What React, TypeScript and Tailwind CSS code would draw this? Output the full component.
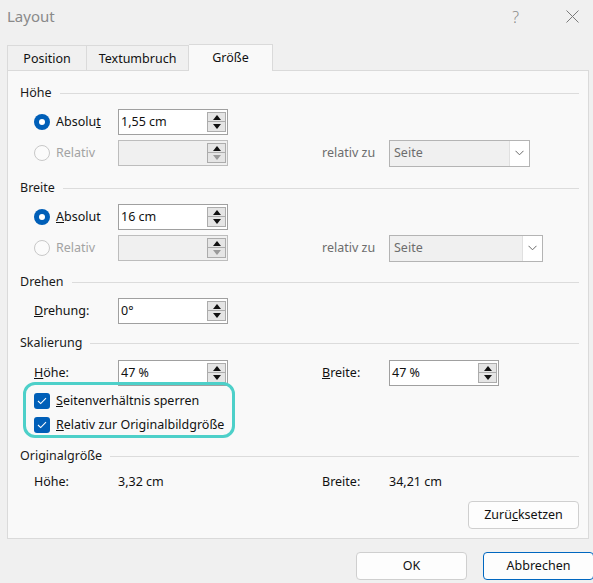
import React from 'react';

const font = "font-['Noto_Sans',sans-serif]";

function SectionHeading({ title }: { title: string }) {
    return (
        <div className="flex items-center h-5 pl-[12px] pr-[9px]">
            <span className="text-[#1a1a1a]">{title}</span>
            <div className="flex-1 h-px bg-[#dcdcdc] ml-[8px]" />
        </div>
    );
}

function SpinButtons({ disabled }: { disabled?: boolean }) {
    return (
        <div className="flex flex-col gap-0 py-[2px] pr-[1px]">
            <div className="w-[19px] h-[11px] border border-[#acacac] bg-[#e5e5e5] flex items-center justify-center">
                <svg width="8" height="5" viewBox="0 0 8 5">
                    <path d="M0 5 L4 0 L8 5 Z" fill="#111" />
                </svg>
            </div>
            <div className="w-[19px] h-[11px] border border-[#acacac] border-t-0 bg-[#e5e5e5] flex items-center justify-center">
                <svg width="8" height="5" viewBox="0 0 8 5">
                    <path d="M0 0 L4 5 L8 0 Z" fill={disabled ? '#9a9a9a' : '#111'} />
                </svg>
            </div>
        </div>
    );
}

function Spin({ value, disabled, width = 'w-[110px]' }: { value?: string; disabled?: boolean; width?: string }) {
    return (
        <div
            className={`${width} h-[26px] border flex items-stretch ${disabled ? 'border-[#bdbdbd] bg-[#f0f0f0]' : 'border-[#a0a0a0] bg-white'}`}
        >
            <div className="flex-1 flex items-center pl-[2px] text-[#111]">{value}</div>
            <SpinButtons disabled={disabled} />
        </div>
    );
}

function Select({ width }: { width: string }) {
    return (
        <div className={`${width} h-[27px] border border-[#b4b4b4] bg-[#f0f0f0] flex items-stretch`}>
            <div className="flex-1 flex items-center pl-[4px] text-[#6d6d6d]">Seite</div>
            <div className="w-[20px] bg-white border-l border-[#e0e0e0] flex items-center justify-center">
                <svg width="9" height="6" viewBox="0 0 9 6">
                    <path d="M0.5 0.8 L4.5 4.8 L8.5 0.8" stroke="#6a6a6a" strokeWidth="1" fill="none" />
                </svg>
            </div>
        </div>
    );
}

function Radio({ checked, disabled }: { checked?: boolean; disabled?: boolean }) {
    if (checked) {
        return (
            <div className="w-[16px] h-[16px] rounded-full bg-[#005fb8] flex items-center justify-center">
                <div className="w-[6px] h-[6px] rounded-full bg-white" />
            </div>
        );
    }
    return (
        <div
            className={`w-[16px] h-[16px] rounded-full border ${disabled ? 'border-[#c8c8c8] bg-[#fbfbfb]' : 'border-[#6a6a6a] bg-white'}`}
        />
    );
}

function Checkbox() {
    return (
        <div className="w-[16px] h-[16px] rounded-[3px] bg-[#005fb8] flex items-center justify-center">
            <svg width="10" height="8" viewBox="0 0 10 8">
                <path d="M1 4 L3.7 6.6 L9 1.2" stroke="white" strokeWidth="1.1" fill="none" />
            </svg>
        </div>
    );
}

function SizeRows({ absLabel, absValue, selectWidth }: { absLabel: React.ReactNode; absValue: string; selectWidth: string }) {
    return (
        <>
            <div className="flex items-center h-[26px] mt-[6px] pl-[26px]">
                <div className="w-[84px] flex items-center gap-[6px]">
                    <Radio checked />
                    <span className="text-[#111]">{absLabel}</span>
                </div>
                <Spin value={absValue} />
            </div>
            <div className="flex items-center h-[26px] mt-[5px] pl-[26px]">
                <div className="w-[84px] flex items-center gap-[6px]">
                    <Radio disabled />
                    <span className="text-[#a3a3a3]">Relativ</span>
                </div>
                <Spin disabled />
                <div className="w-[94px]" />
                <span className="w-[67px] text-[#6d6d6d]">relativ zu</span>
                <Select width={selectWidth} />
            </div>
        </>
    );
}

export default function App() {
    return (
        <div className={`w-[593px] h-[583px] bg-[#f0f0f0] overflow-hidden flex flex-col text-[12.5px] ${font}`}>
            {/* title bar */}
            <div className="h-[44px] flex items-start pt-[5px] pl-[7px]">
                <span className="text-[15px] text-[#8a8a8a]">Layout</span>
                <span className="ml-auto text-[16px] text-[#8a8a8a] mr-[47px] font-light">?</span>
                <svg width="13" height="13" viewBox="0 0 13 13" className="mt-[5px] mr-[14px]">
                    <path d="M0.5 0.5 L12.5 12.5 M12.5 0.5 L0.5 12.5" stroke="#7a7a7a" strokeWidth="1" />
                </svg>
            </div>

            {/* tabs */}
            <div className="flex items-end pl-[7px] h-[26px] relative z-10">
                <div className="w-[80px] h-[25px] border border-b-0 border-[#dadada] bg-[#f0f0f0] flex items-center justify-center text-[#111] pt-[2px]">
                    Position
                </div>
                <div className="w-[102px] h-[25px] border border-l-0 border-b-0 border-[#dadada] bg-[#f0f0f0] flex items-center justify-center text-[#111] pt-[2px]">
                    Textumbruch
                </div>
                <div className="w-[84px] h-[27px] -mb-px border border-l-0 border-b-0 border-[#dadada] bg-[#f9f9f9] flex items-center justify-center text-[#111]">
                    Größe
                </div>
            </div>

            {/* panel */}
            <div className="mx-[7px] w-[582px] border border-[#dadada] bg-[#f9f9f9] pt-[12px] pb-[9px] flex flex-col">
                <SectionHeading title="Höhe" />
                <SizeRows
                    absLabel={<>Absolu<span className="underline">t</span></>}
                    absValue="1,55 cm"
                    selectWidth="w-[141px]"
                />

                <div className="mt-[12px]">
                    <SectionHeading title="Breite" />
                </div>
                <SizeRows
                    absLabel={<><span className="underline">A</span>bsolut</>}
                    absValue="16 cm"
                    selectWidth="w-[154px]"
                />

                <div className="mt-[11px]">
                    <SectionHeading title="Drehen" />
                </div>
                <div className="flex items-center h-[26px] mt-[6px] pl-[26px]">
                    <span className="w-[84px] text-[#111]">
                        <span className="underline">D</span>rehung:
                    </span>
                    <Spin value="0°" />
                </div>

                <div className="mt-[9px]">
                    <SectionHeading title="Skalierung" />
                </div>
                <div className="flex items-center h-[26px] mt-[7px] pl-[26px]">
                    <span className="w-[84px] text-[#111]">
                        <span className="underline">H</span>öhe:
                    </span>
                    <Spin value="47 %" />
                    <div className="w-[94px]" />
                    <span className="w-[67px] text-[#111]">
                        <span className="underline">B</span>reite:
                    </span>
                    <Spin value="47 %" />
                </div>

                <div className="relative mt-[3px]">
                    <div className="flex items-center h-[24px] pl-[26px] gap-[6px]">
                        <Checkbox />
                        <span className="text-[#111]">
                            <span className="underline">S</span>eitenverhältnis sperren
                        </span>
                    </div>
                    <div className="flex items-center h-[24px] pl-[26px] gap-[6px]">
                        <Checkbox />
                        <span className="text-[#111]">
                            <span className="underline">R</span>elativ zur Originalbildgröße
                        </span>
                    </div>
                    <div className="absolute left-[15px] -top-[7px] w-[212px] h-[56px] border-[3px] border-[#4dd0c9] rounded-[12px] pointer-events-none" />
                </div>

                <div className="mt-[9px]">
                    <SectionHeading title="Originalgröße" />
                </div>
                <div className="flex items-center h-5 mt-[6px] pl-[26px] text-[#111]">
                    <span className="w-[84px]">Höhe:</span>
                    <span className="w-[110px]">3,32 cm</span>
                    <div className="w-[94px]" />
                    <span className="w-[67px]">Breite:</span>
                    <span>34,21 cm</span>
                </div>

                <div className="flex justify-end mt-[9px] pr-[9px]">
                    <button className="w-[111px] h-[28px] rounded-[4px] border border-[#cfcfcf] bg-[#fdfdfd] text-[#111]">
                        Zurü<span className="underline">c</span>ksetzen
                    </button>
                </div>
            </div>

            {/* bottom buttons */}
            <div className="flex justify-end gap-[16px] mt-[13px] -mr-[1px]">
                <button className="w-[111px] h-[28px] rounded-[4px] border border-[#cfcfcf] bg-[#fdfdfd] text-[#111]">
                    OK
                </button>
                <button className="w-[111px] h-[28px] rounded-[4px] border border-[#0067c0] bg-[#fdfdfd] text-[#111]">
                    Abbrechen
                </button>
            </div>
        </div>
    );
}
